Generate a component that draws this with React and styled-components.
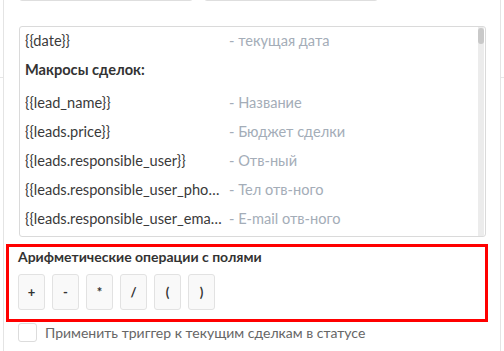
import styled, { createGlobalStyle } from "styled-components";

const GlobalStyle = createGlobalStyle`
  html, body {
    margin: 0;
    padding: 0;
  }
  body {
    background: linear-gradient(#e6e6e6, #e6e6e6) 0 77px / 100% 1px no-repeat, #fff;
    font-family: Lato, "Noto Sans", sans-serif;
    overflow: hidden;
  }
`;

const Panel = styled.div`
  box-sizing: border-box;
  margin-left: 3px;
  width: 498px;
  height: 351px;
  background: #fff;
  border-left: 1px solid #e4e4e4;
  border-right: 1px solid #e4e4e4;
  overflow: hidden;
`;

const InputsRow = styled.div`
  display: flex;
  gap: 11px;
  margin: -31px 0 0 15px;
`;

const Input = styled.div`
  box-sizing: border-box;
  width: 174px;
  height: 32px;
  border: 1px solid #dedede;
  border-radius: 3px;
`;

const MacroBox = styled.div`
  display: flex;
  box-sizing: border-box;
  height: 211px;
  margin: 25px 14px 0 15px;
  border: 1px solid #dadada;
  border-radius: 3px;
  overflow: hidden;
`;

const MacroList = styled.div`
  flex: 1;
  padding: 0 0 0 5px;
  margin-top: -1px;
`;

const MacroRow = styled.div`
  display: flex;
  align-items: center;
  height: 29px;
  font-size: 14.6px;
`;

const Macro = styled.span`
  width: 198px;
  margin-right: 6px;
  color: #3a3a3a;
  white-space: nowrap;
  overflow: hidden;
  text-overflow: ellipsis;
`;

const Desc = styled.span`
  color: #a4adb8;
`;

const GroupTitle = styled.div`
  height: 33px;
  padding-top: 5px;
  box-sizing: border-box;
  font-size: 14.6px;
  font-weight: 700;
  color: #333;
  line-height: 20px;
`;

const ScrollTrack = styled.div`
  width: 6px;
  margin-right: 1px;
  background: #ececec;
`;

const ScrollThumb = styled.div`
  height: 16px;
  margin-top: 1px;
  border-radius: 3px;
  background: #c9c9c9;
`;

const OpsSection = styled.div`
  margin: 7px 12px 0 2px;
  padding: 0 9px 9px;
  border: 3px solid #ff0000;
`;

const OpsTitle = styled.div`
  font-size: 14px;
  font-weight: 700;
  color: #333;
  line-height: 20px;
`;

const OpsRow = styled.div`
  display: flex;
  gap: 7px;
  margin-top: 7px;
`;

const OpButton = styled.button`
  box-sizing: border-box;
  width: 27px;
  height: 36px;
  padding: 0;
  border: 1px solid #e2e2e2;
  border-radius: 3px;
  background: #f9f9f9;
  font-family: inherit;
  font-size: 13px;
  font-weight: 700;
  color: #333;
`;

const CheckRow = styled.label`
  display: flex;
  align-items: center;
  gap: 8px;
  height: 19px;
  margin: 1px 0 0 14px;
  font-size: 14px;
  line-height: 19px;
  color: #666;
`;

const CheckBox = styled.span`
  box-sizing: border-box;
  width: 19px;
  height: 19px;
  border: 1px solid #dcdcdc;
  border-radius: 3px;
  background: #fff;
`;

const macros = [
  ["{{lead_name}}", "- Название"],
  ["{{leads.price}}", "- Бюджет сделки"],
  ["{{leads.responsible_user}}", "- Отв-ный"],
  ["{{leads.responsible_user_phone}}", "- Тел отв-ного"],
  ["{{leads.responsible_user_email}}", "- E-mail отв-ного"],
];

const ops = ["+", "-", "*", "/", "(", ")"];

const App = () => {
  return (
    <>
      <GlobalStyle />
      <Panel>
        <InputsRow>
          <Input />
          <Input />
        </InputsRow>
        <MacroBox>
          <MacroList>
            <MacroRow>
              <Macro>{"{{date}}"}</Macro>
              <Desc>- текущая дата</Desc>
            </MacroRow>
            <GroupTitle>Макросы сделок:</GroupTitle>
            {macros.map(([code, label]) => (
              <MacroRow key={code}>
                <Macro>{code}</Macro>
                <Desc>{label}</Desc>
              </MacroRow>
            ))}
          </MacroList>
          <ScrollTrack>
            <ScrollThumb />
          </ScrollTrack>
        </MacroBox>
        <OpsSection>
          <OpsTitle>Арифметические операции с полями</OpsTitle>
          <OpsRow>
            {ops.map((op) => (
              <OpButton key={op}>{op}</OpButton>
            ))}
          </OpsRow>
        </OpsSection>
        <CheckRow>
          <CheckBox />
          Применить триггер к текущим сделкам в статусе
        </CheckRow>
      </Panel>
    </>
  );
};

export default App;
